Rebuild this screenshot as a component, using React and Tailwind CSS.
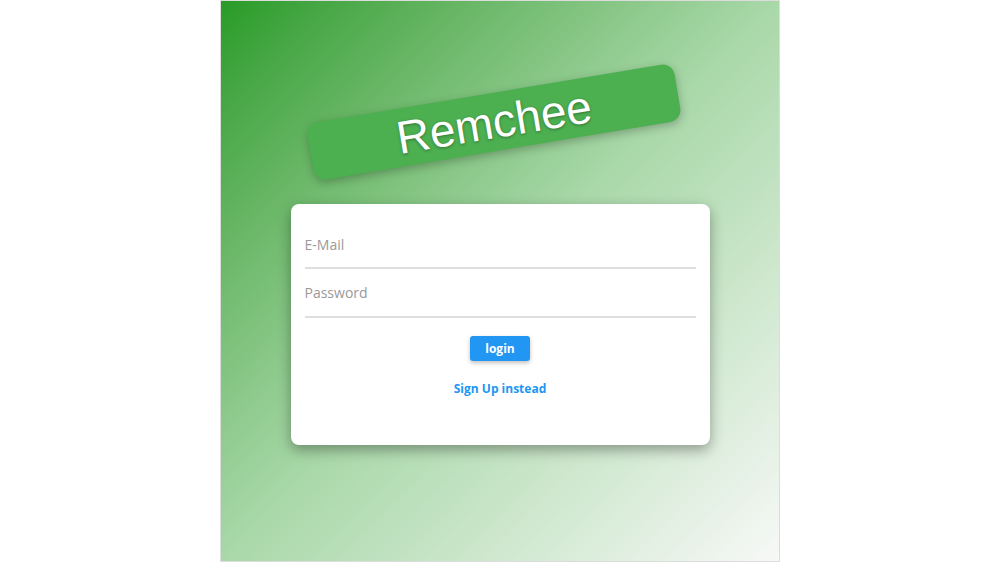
import React, { useState } from 'react';

function App() {
  const [email, setEmail] = useState('');
  const [password, setPassword] = useState('');

  return (
    <div className="w-full h-[563px] bg-white flex justify-center">
      <div className="w-[560px] h-[562px] border border-[#dcdcdc] bg-gradient-to-br from-[#269b26] via-[#a9d8a9] to-[#f7f8f7] flex flex-col items-center">
        <div className="mt-[92px] w-[372px] h-[58px] -translate-x-[6px] -rotate-[9.5deg] rounded-[12px] bg-[#4caf50] shadow-[0_3px_10px_rgba(0,0,0,0.25)] flex items-center justify-center">
          <span className="text-white text-[46px] leading-none font-['Liberation_Sans',Arial,sans-serif] [text-shadow:0_1px_3px_rgba(0,0,0,0.35)]">Remchee</span>
        </div>

        <div className="mt-[53px] w-[419px] h-[241px] bg-white rounded-lg shadow-[0_5px_14px_rgba(0,0,0,0.35)] px-[14px] pt-[17px] flex flex-col items-center font-['Open_Sans','Noto_Sans',sans-serif]">
          <input
            className="w-full h-[48px] border-b-2 border-[#dedede] outline-none text-[14px] text-[#333] placeholder:text-[#9a9a9a] bg-transparent"
            placeholder="E-Mail"
            value={email}
            onChange={e => setEmail(e.target.value)}
          />
          <input
            type="password"
            className="w-full h-[49px] border-b-2 border-[#dedede] outline-none text-[14px] text-[#333] placeholder:text-[#9a9a9a] bg-transparent"
            placeholder="Password"
            value={password}
            onChange={e => setPassword(e.target.value)}
          />
          <button className="mt-[18px] w-[60px] h-[25px] rounded-[3px] bg-[#2196f3] text-white text-[12px] font-bold shadow-[0_2px_4px_rgba(0,0,0,0.25)]">
            login
          </button>
          <button className="mt-[20px] text-[#2196f3] text-[12px] font-bold leading-[16px]">
            Sign Up instead
          </button>
        </div>
      </div>
    </div>
  );
}

export default App;
